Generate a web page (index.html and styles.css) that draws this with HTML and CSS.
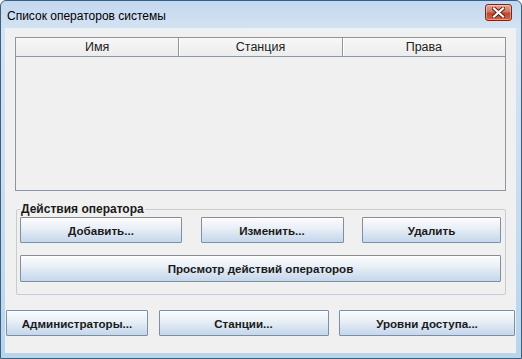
FILE: index.html
```html
<!DOCTYPE html>
<html lang="ru">
<head>
    <meta charset="UTF-8">
    <title>Список операторов системы</title>
    <link rel="stylesheet" href="styles.css">
</head>
<body>
    <div class="window">
        <div class="title-bar">
            <span class="title">Список операторов системы</span>
            <button class="close-btn" aria-label="Закрыть">
                <svg width="13" height="11" viewBox="0 0 13 11">
                    <path d="M2 1.5 L11 9.5 M11 1.5 L2 9.5" stroke="#5a1a12" stroke-width="4" stroke-linecap="square"/>
                    <path d="M2 1.5 L11 9.5 M11 1.5 L2 9.5" stroke="#ffffff" stroke-width="2.2" stroke-linecap="square"/>
                </svg>
            </button>
        </div>

        <div class="content">
            <div class="table">
                <div class="table-head">
                    <div class="th">Имя</div>
                    <div class="th">Станция</div>
                    <div class="th last">Права</div>
                </div>
                <div class="table-body"></div>
            </div>

            <fieldset class="actions">
                <legend>Действия оператора</legend>
                <div class="row">
                    <button class="btn btn-add">Добавить...</button>
                    <button class="btn btn-edit">Изменить...</button>
                    <button class="btn btn-del">Удалить</button>
                </div>
                <button class="btn btn-wide">Просмотр действий операторов</button>
            </fieldset>

            <div class="bottom-row">
                <button class="btn btn-admins">Администраторы...</button>
                <button class="btn btn-stations">Станции...</button>
                <button class="btn btn-levels">Уровни доступа...</button>
            </div>
        </div>
    </div>
</body>
</html>
```

FILE: styles.css
```css
* {
    box-sizing: border-box;
}

body {
    margin: 0;
    font-family: "Liberation Sans", Arial, sans-serif;
    font-size: 12px;
    color: #000;
}

.window {
    width: 522px;
    height: 359px;
    border: 1px solid #3d5f80;
    border-radius: 6px 6px 0 0;
    background: linear-gradient(to bottom, #c3d7ee 0px, #d4e3f3 28px, #c9dcef 200px, #b6d6ee 100%);
    display: flex;
    flex-direction: column;
}

.title-bar {
    height: 27px;
    display: flex;
    align-items: center;
    justify-content: space-between;
    padding: 0 9px 0 6px;
}

.title {
    font-size: 12px;
    color: #000;
    padding-top: 2px;
}

.close-btn {
    width: 27px;
    height: 17px;
    margin-top: -4px;
    border: 1px solid #6b2a22;
    border-radius: 3px;
    padding: 0;
    display: flex;
    align-items: center;
    justify-content: center;
    background: linear-gradient(to bottom, #e8a493 0%, #d7775f 45%, #c2462a 55%, #d0644a 100%);
    box-shadow: inset 0 0 0 1px rgba(255, 255, 255, 0.35);
}

.content {
    flex: 1;
    margin: 0 5px 5px 4px;
    background: #f0f0f0;
    border: 1px solid #eaf2fa;
    display: flex;
    flex-direction: column;
}

/* table */
.table {
    margin: 8px 9px 0 9px;
    height: 154px;
    border: 1px solid #8e959c;
    display: flex;
    flex-direction: column;
}

.table-head {
    display: flex;
    height: 19px;
    border-bottom: 1px solid #8e959c;
    background: linear-gradient(to bottom, #f7f7f7, #ececec);
}

.th {
    flex: 1;
    text-align: center;
    line-height: 18px;
    color: #222;
    font-size: 12.5px;
    border-right: 1px solid #8e959c;
    box-shadow: 1px 0 0 #ffffff;
}

.th.last {
    border-right: none;
    box-shadow: none;
}

.table-body {
    flex: 1;
    background: #f0f0f0;
}

/* group */
.actions {
    margin: 11px 9px 0 10px;
    padding: 0 4px 12px 3px;
    border: 1px solid #c6ccd3;
    border-radius: 2px;
}

.actions legend {
    font-weight: bold;
    font-size: 12px;
    line-height: 14px;
    color: #1a1a1a;
    padding: 0 1px;
    margin-left: 0;
}

.row {
    display: flex;
    justify-content: space-between;
    margin-top: 1px;
}

.btn {
    font-family: "Liberation Sans", Arial, sans-serif;
    font-weight: bold;
    font-size: 11.6px;
    color: #1a1a1a;
    height: 26px;
    padding: 0;
    border: 1px solid #7f8f9f;
    border-radius: 1px;
    background: linear-gradient(to bottom, #fbfcfe 0%, #eaf0f7 40%, #d6e3f1 70%, #c5d7ec 100%);
    box-shadow: inset 0 1px 0 #ffffff;
}

.btn-add {
    width: 162px;
}

.btn-edit {
    width: 143px;
}

.btn-del {
    width: 139px;
}

.btn-wide {
    width: 100%;
    height: 27px;
    margin-top: 12px;
    display: block;
}

.bottom-row {
    display: flex;
    justify-content: space-between;
    margin-top: 15px;
}

.btn-admins {
    width: 142px;
}

.btn-stations {
    width: 170px;
}

.btn-levels {
    width: 176px;
}
```
